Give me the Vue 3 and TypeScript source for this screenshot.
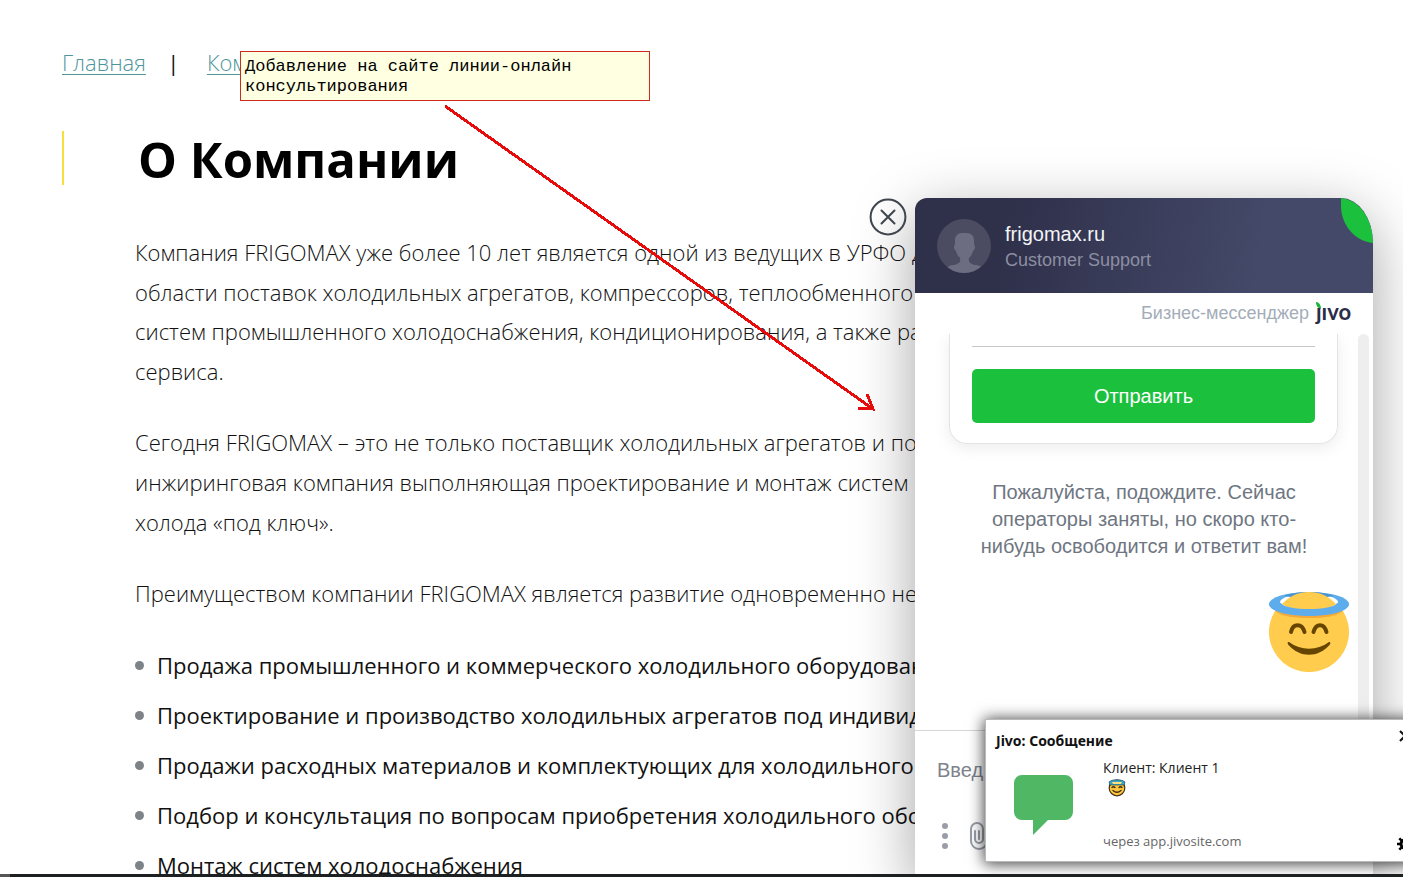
<script setup lang="ts">
const paragraphs: string[][] = [
  [
    'Компания FRIGOMAX уже более 10 лет является одной из ведущих в УРФО д',
    'области поставок холодильных агрегатов, компрессоров, теплообменного о',
    'систем промышленного холодоснабжения, кондиционирования, а также ра',
    'сервиса.',
  ],
  [
    'Сегодня FRIGOMAX – это не только поставщик холодильных агрегатов и пос',
    'инжиринговая компания выполняющая проектирование и монтаж систем п',
    'холода «под ключ».',
  ],
  ['Преимуществом компании FRIGOMAX является развитие одновременно нес'],
]

const services: string[] = [
  'Продажа промышленного и коммерческого холодильного оборудован',
  'Проектирование и производство холодильных агрегатов под индивид',
  'Продажи расходных материалов и комплектующих для холодильного',
  'Подбор и консультация по вопросам приобретения холодильного обо',
  'Монтаж систем холодоснабжения',
]
</script>

<template>
  <div class="page">
    <main class="content">
      <nav class="crumbs">
        <a href="#">Главная</a>
        <span class="sep">|</span>
        <a href="#">Ком</a>
      </nav>

      <h1 class="title">О Компании</h1>

      <div class="text">
        <p v-for="(lines, i) in paragraphs" :key="i">
          <template v-for="(line, j) in lines" :key="j"><br v-if="j > 0" />{{ line }}</template>
        </p>
        <ul>
          <li v-for="item in services" :key="item">{{ item }}</li>
        </ul>
      </div>
    </main>

    <button class="close" type="button" aria-label="Закрыть">
      <svg viewBox="0 0 38 38" fill="none" stroke="#3f444d" stroke-width="2" stroke-linecap="round">
        <circle cx="19" cy="19" r="17.4" />
        <path d="M12.5 12.5 25.5 25.5M25.5 12.5 12.5 25.5" />
      </svg>
    </button>

    <section class="chat">
      <header class="chat-head">
        <svg class="avatar" viewBox="0 0 54 54">
          <defs>
            <clipPath id="avatar-clip"><circle cx="27" cy="27" r="27" /></clipPath>
          </defs>
          <circle cx="27" cy="27" r="27" fill="#4b4c62" />
          <path
            clip-path="url(#avatar-clip)"
            fill="#6c6d80"
            d="M25 14h5c4 0 7 3 7 7v4c0 1 1 1 1 3s-1 3-2 4c-1 4-3 6-4 7-1 5 2 6 6 7 4 0 7 2 9 4v5H8v-5c2-2 5-4 9-4 4-1 7-2 6-7-1-1-3-3-4-7-1-1-2-2-2-4s1-2 1-3v-4c0-4 3-7 7-7z"
          />
        </svg>
        <div class="who">
          <div class="name">frigomax.ru</div>
          <div class="role">Customer Support</div>
        </div>
        <svg class="leaf" viewBox="0 0 32 45">
          <path fill="#1bc13c" d="M0 0C18 2 32 20 32 45 13 43 0 26 0 8z" />
        </svg>
      </header>

      <div class="brand">
        <span>Бизнес-мессенджер</span>
        <svg class="logo" viewBox="0 0 38 26" role="img" aria-label="jivo">
          <path fill="#1bb53c" d="M1 1C4 1 6 4 6 8 3 7 1 5 1 1z" />
          <text x="1" y="19">ȷıvo</text>
        </svg>
      </div>

      <div class="chat-body">
        <div class="thread">
          <form class="card" @submit.prevent>
            <input class="field" type="text" aria-label="Контакт" />
            <button class="send" type="submit">Отправить</button>
          </form>
          <p class="wait">
            Пожалуйста, подождите. Сейчас<br />операторы заняты, но скоро кто-<br />нибудь освободится и ответит вам!
          </p>
          <svg class="emoji" viewBox="0 0 80 80">
            <ellipse cx="40" cy="12" rx="40" ry="12" fill="#5dadec" />
            <ellipse cx="40" cy="10" rx="29" ry="8" fill="#fff" />
            <path fill="#4a94d2" d="M15 4C22 1 30 0 40 0S58 1 65 4L58 5H22z" />
            <path fill="#ffcc4d" d="M40 0C53 0 60 5 67 12 62 16 52 18 40 18S18 16 13 12C20 5 27 0 40 0z" />
            <path fill="#ffcc4d" d="M6 19A40 40 0 1 0 74 19z" />
            <path fill="#f4a93a" d="M6 19C14 25 25 26 40 26S66 25 74 19z" />
            <path fill="#5dadec" d="M0 12C0 19 18 24 40 24S80 19 80 12L68 11C66 15 53 17 40 17S14 15 12 11z" />
            <path fill="none" stroke="#664500" stroke-width="4" stroke-linecap="round" d="M22 40C24 31 33 31 35.500 40M44.500 40C47 31 55 31 57.500 40" />
            <path fill="#664500" d="M20 50C32 59 48 59 60 50 62 50 61.500 52 60.500 53 49 66 31 66 19.500 53 18.500 52 18 50 20 50z" />
          </svg>
        </div>
        <div class="track"></div>
      </div>

      <footer class="composer">
        <input class="message" type="text" placeholder="Введ" aria-label="Сообщение" />
        <div class="tools">
          <button type="button" aria-label="Меню">
            <svg viewBox="0 0 8 26" width="8" height="26" fill="#9a9da8">
              <circle cx="4" cy="3" r="3" /><circle cx="4" cy="13" r="3" /><circle cx="4" cy="23" r="3" />
            </svg>
          </button>
          <button type="button" aria-label="Прикрепить файл">
            <svg viewBox="0 0 18 28" width="18" height="28" fill="none" stroke="#9a9da8" stroke-width="2" stroke-linecap="round">
              <path d="M5 9v8a4 4 0 0 0 8 0V7a6 6 0 0 0-12 0v12a8 8 0 0 0 16 0V9M9 9v8" />
            </svg>
          </button>
        </div>
      </footer>
    </section>

    <aside class="toast">
      <div class="toast-title">Jivo: Сообщение</div>
      <div class="toast-main">
        <svg class="bubble" viewBox="0 0 60 62">
          <path fill="#50b765" d="M8 1h43a8 8 0 0 1 8 8v29a8 8 0 0 1-8 8H34L19 61V46H8a8 8 0 0 1-8-8V9a8 8 0 0 1 8-8z" />
        </svg>
        <div class="toast-text">
          <div>Клиент: Клиент 1</div>
          <svg class="mini" viewBox="0 0 18 18">
            <circle cx="9" cy="9" r="7.800" fill="#ffc83d" stroke="#40321a" stroke-width="1.200" />
            <path fill="#3aa5c4" stroke="#244a55" stroke-width=".7" d="M1 3C4 0 14 0 17 3L16 6H2z" />
            <path fill="#ffe07a" d="M4 3h10l-1 2H5z" />
            <path fill="none" stroke="#3b2a10" stroke-width="1.300" stroke-linecap="round" d="M4 8.500q1.500-1.500 3 0M11 8.500q1.500-1.500 3 0M5 11.500q4 3.500 8 0" />
          </svg>
          <div class="via">через app.jivosite.com</div>
        </div>
      </div>
      <button class="toast-close" type="button" aria-label="Закрыть уведомление">
        <svg viewBox="0 0 12 12" width="12" height="12" stroke="#111" stroke-width="2"><path d="M1 1 11 11M11 1 1 11" /></svg>
      </button>
      <button class="toast-gear" type="button" aria-label="Настройки">
        <svg viewBox="0 0 16 16" width="16" height="16" fill="none" stroke="#000">
          <circle cx="8" cy="8" r="4" stroke-width="3" />
          <path stroke-width="2.500" d="M8 0v3M8 13v3M0 8h3M13 8h3M2.300 2.300l2 2M11.700 11.700l2 2M2.300 13.700l2-2M11.700 4.300l2-2" />
        </svg>
      </button>
    </aside>

    <div class="note">Добавление на сайте линии-онлайн консультирования</div>
    <svg class="arrow" viewBox="0 0 434 308" fill="none" stroke="#e60c0c" stroke-width="3" shape-rendering="crispEdges">
      <path d="M3 4 431 307M425 292 431 307 416 306" />
    </svg>

    <div class="taskbar"></div>
  </div>
</template>

<style>
html,
body {
  margin: 0;
  overflow: hidden;
}
</style>

<style scoped>
.page {
  position: relative;
  height: 100vh;
  overflow: hidden;
  background: #fff;
  color: #111;
  font-family: 'Open Sans', 'Noto Sans', sans-serif;
}
button {
  padding: 0;
  border: 0;
  background: none;
  cursor: pointer;
}
svg {
  display: block;
}
.content {
  padding: 47px 0 0 62px;
  white-space: nowrap;
}
.crumbs {
  display: flex;
  align-items: center;
  height: 30px;
  font-size: 22px;
  line-height: 30px;
  font-weight: 300;
}
.crumbs a {
  color: #4d959b;
  text-decoration-thickness: 1px;
  text-underline-offset: 3px;
}
.sep {
  box-sizing: border-box;
  width: 61px;
  padding-right: 6px;
  text-align: center;
  font-weight: 400;
}
.title {
  margin: 54px 0 0;
  padding-left: 74px;
  border-left: 2px solid #f7e03c;
  height: 54px;
  line-height: 56px;
  font-size: 49px;
  font-weight: 700;
  color: #000;
}
.text {
  margin: 48px 0 0 73px;
  font-size: 22px;
  line-height: 1.8;
  font-weight: 300;
}
.text p {
  margin: 0 0 32px;
}
.text ul {
  margin: 0;
  padding: 0;
  list-style: none;
  font-weight: 400;
}
.text li {
  display: flex;
  align-items: center;
  gap: 13px;
  height: 40px;
  margin-bottom: 10px;
}
.text li::before {
  content: '';
  width: 9px;
  height: 9px;
  border-radius: 50%;
  background: #7d8387;
}

.close {
  position: absolute;
  top: 198px;
  right: 496px;
  width: 38px;
  height: 38px;
  z-index: 3;
}
.chat {
  position: absolute;
  top: 198px;
  right: 30px;
  bottom: 0;
  width: 458px;
  display: flex;
  flex-direction: column;
  border-radius: 12px 32px 0 0 / 12px 45px 0 0;
  background: #fff;
  box-shadow: 0 16px 60px rgba(0, 0, 0, 0.36);
  font-family: 'Liberation Sans', Arial, sans-serif;
  z-index: 2;
}
.chat-head {
  position: relative;
  display: flex;
  align-items: center;
  gap: 14px;
  height: 95px;
  padding-left: 22px;
  border-radius: 12px 32px 0 0 / 12px 45px 0 0;
  background: linear-gradient(100deg, #2f304a 20%, #444969 75%);
  overflow: hidden;
}
.avatar {
  width: 54px;
  height: 54px;
}
.name {
  padding-top: 2px;
  font-size: 20px;
  line-height: 26px;
  color: #f3f4f8;
}
.role {
  font-size: 18px;
  line-height: 26px;
  color: #8c8ea2;
}
.leaf {
  position: absolute;
  top: 0;
  right: 0;
  width: 32px;
  height: 45px;
}
.brand {
  display: flex;
  justify-content: flex-end;
  align-items: center;
  gap: 6px;
  height: 41px;
  padding-right: 20px;
  font-size: 18px;
  color: #a3adb9;
}
.logo {
  width: 38px;
  height: 26px;
  overflow: visible;
}
.logo text {
  font-family: Lato, sans-serif;
  font-size: 22px;
  font-weight: 700;
  fill: #2a2c48;
}
.chat-body {
  flex: 1;
  min-height: 0;
  display: flex;
  padding-right: 4px;
  overflow: hidden;
}
.thread {
  flex: 1;
  display: flex;
  flex-direction: column;
}
.track {
  width: 11px;
  border-radius: 6px 6px 0 0;
  background: #eee;
}
.card {
  margin: 0 20px 0 34px;
  padding: 0 22px 20px;
  border: 1px solid #e3e4e6;
  border-top: 0;
  border-radius: 0 0 18px 18px;
  box-shadow: 0 4px 16px rgba(0, 0, 0, 0.08);
}
.field {
  display: block;
  box-sizing: border-box;
  width: 100%;
  height: 13px;
  padding: 0;
  border: 0;
  border-bottom: 1px solid #c6c7cb;
}
.send {
  display: block;
  width: 100%;
  height: 54px;
  margin-top: 22px;
  border-radius: 5px;
  background: #1bc13c;
  color: #fff;
  font: 20px 'Liberation Sans', Arial, sans-serif;
}
.wait {
  margin: 35px 0 0 15px;
  text-align: center;
  font-size: 20px;
  line-height: 27px;
  color: #6f7682;
}
.emoji {
  width: 80px;
  height: 80px;
  margin: 32px 9px 0 auto;
}
.composer {
  height: 147px;
  box-sizing: border-box;
  border-top: 1px solid #d5d6da;
  padding: 26px 22px 0;
}
.message {
  display: block;
  width: 100%;
  height: 26px;
  padding: 0;
  border: 0;
  font: 20px 'Liberation Sans', Arial, sans-serif;
}
.message::placeholder {
  color: #7d828c;
  opacity: 1;
}
.tools {
  display: flex;
  align-items: center;
  gap: 21px;
  margin-top: 39px;
  padding-left: 4px;
}

.toast {
  position: absolute;
  right: -20px;
  bottom: 16px;
  width: 437px;
  height: 141px;
  box-sizing: border-box;
  padding: 11px 0 0 10px;
  background: #fff;
  box-shadow: 0 0 0 1px #b9b9b9, 0 1px 14px 2px rgba(0, 0, 0, 0.75);
  z-index: 4;
  font-size: 14px;
  line-height: 20px;
  color: #222;
}
.toast-title {
  font-family: 'Noto Sans', sans-serif;
  font-weight: 700;
  font-size: 14px;
  color: #111;
}
.toast-main {
  display: flex;
  gap: 29px;
  padding: 7px 0 0 18px;
}
.bubble {
  width: 60px;
  height: 62px;
  margin-top: 16px;
}
.mini {
  width: 18px;
  height: 18px;
  margin: 1px 0 0 5px;
}
.via {
  margin-top: 34px;
  font-size: 13px;
  color: #666;
}
.toast-close {
  position: absolute;
  top: 10px;
  right: 12px;
}
.toast-gear {
  position: absolute;
  bottom: 9px;
  right: 10px;
}

.note {
  position: absolute;
  top: 51px;
  left: 240px;
  width: 410px;
  height: 50px;
  box-sizing: border-box;
  padding: 5px 4px;
  border: 1px solid #cf2a1e;
  background: #ffffe1;
  color: #000;
  font: 17px / 20px 'Liberation Mono', 'Courier New', monospace;
  z-index: 5;
}
.arrow {
  position: absolute;
  top: 102px;
  left: 442px;
  width: 434px;
  height: 308px;
  overflow: visible;
  z-index: 5;
}
.taskbar {
  position: absolute;
  left: 0;
  right: 0;
  bottom: 0;
  height: 3px;
  box-sizing: border-box;
  border-left: 10px solid #555;
  background: #1c2020;
  z-index: 6;
}
</style>
